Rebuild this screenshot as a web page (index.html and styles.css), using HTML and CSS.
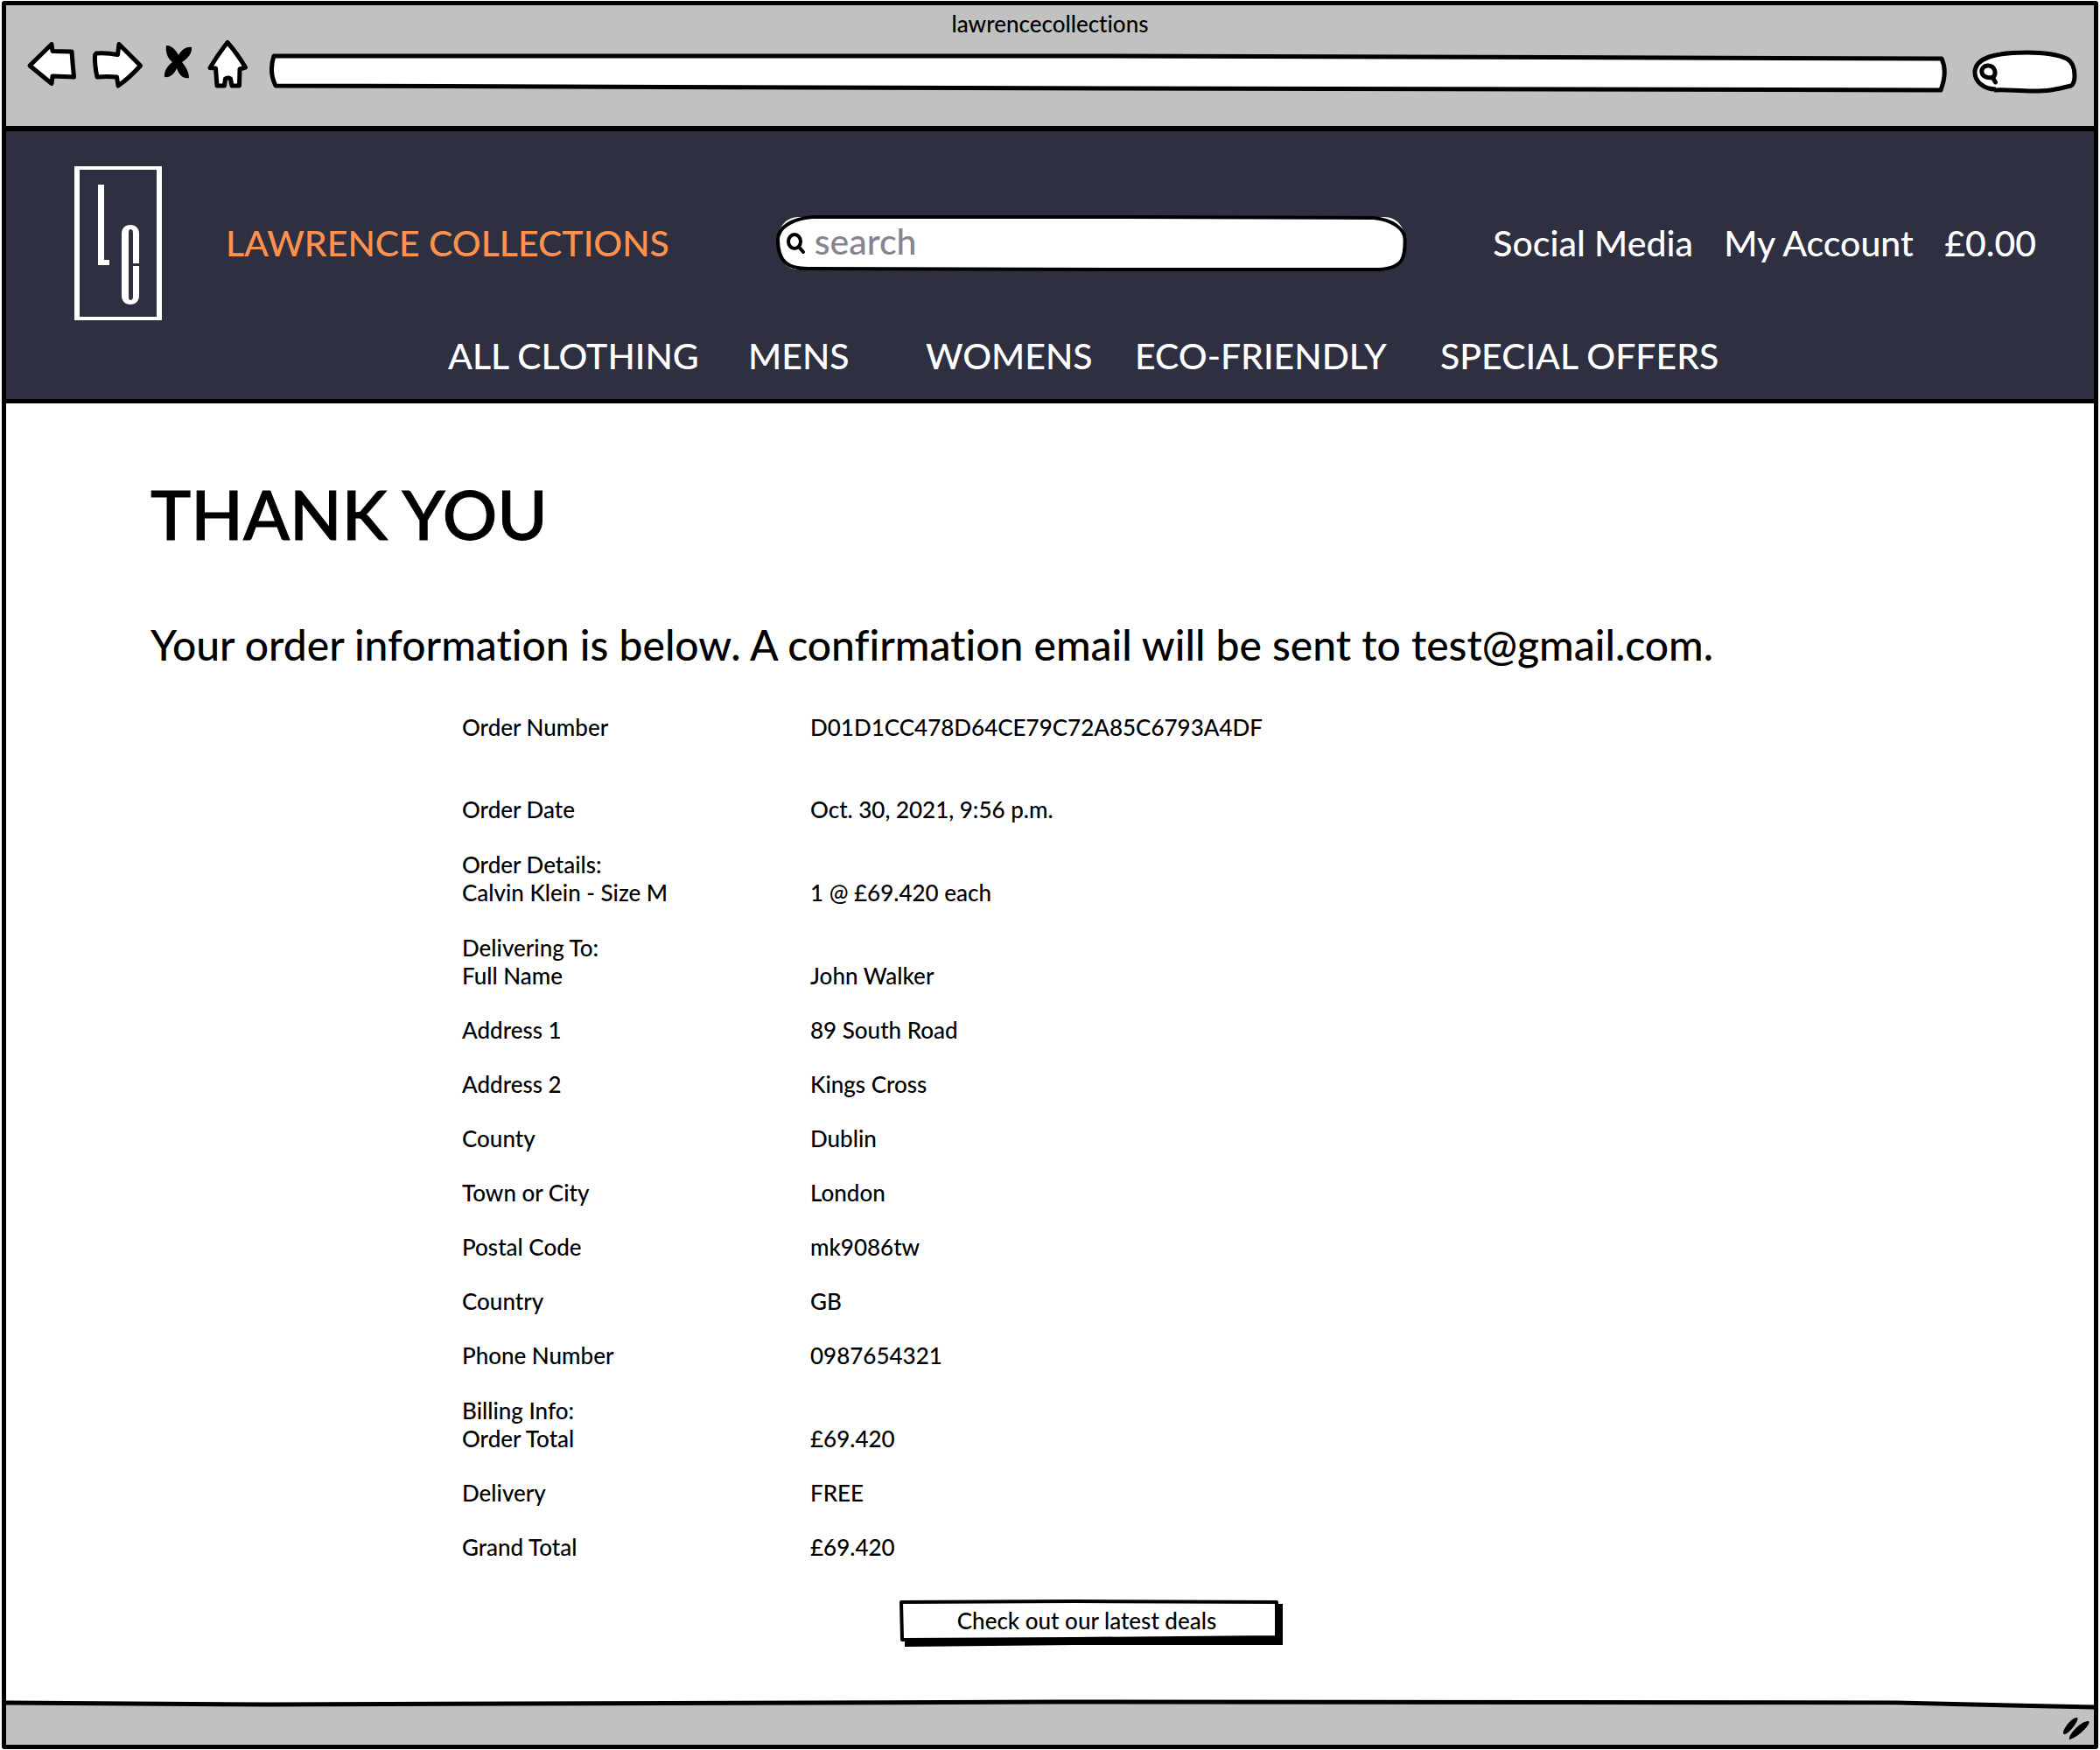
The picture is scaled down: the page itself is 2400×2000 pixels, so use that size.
FILE: index.html
```html
<!DOCTYPE html>
<html lang="en">
<head>
<meta charset="utf-8">
<title>lawrencecollections</title>
<link rel="stylesheet" href="styles.css">
</head>
<body>
<div class="window">
  <div class="chrome">
    <div class="chrome-title">lawrencecollections</div>
    <div class="toolbar">
      <button class="tool tool-wide" type="button" aria-label="Back">
        <svg viewBox="30 44 60 60"><path class="shape" d="M34 75L59 50.500L60 58.500L82 59Q83 73 84.500 88L60 87L59 95.500Z"/></svg>
      </button>
      <button class="tool tool-wide" type="button" aria-label="Forward">
        <svg viewBox="104 44 60 60"><path class="shape" d="M110 61Q122 60 134.500 62.500L136 50.500L160.500 75Q148 89 135 98L133.500 88Q122 87 111 88Q108 74 108.500 63Z"/></svg>
      </button>
      <button class="tool tool-stop" type="button" aria-label="Stop">
        <svg viewBox="178 44 44 60"><path d="M191 52C196 52 201 57 204 63C208 56 214 53 219 54C220 61 214 67 208 71C213 77 216 83 216 89C209 91 204 84 202 78C199 85 194 89 188 88C187 81 192 75 197 71C191 66 189 59 190 52Z"/></svg>
      </button>
      <button class="tool tool-home" type="button" aria-label="Home">
        <svg viewBox="236 44 50 60"><path class="shape" d="M260 48.500Q271 61 280.500 77L274 79L273.500 98L265 98L263.500 90Q260 88 257.500 90L256.500 98L248 98L246.500 78L240 77.500Q250 61 260 48.500Z"/></svg>
      </button>
      <label class="address">
        <svg class="sketch" viewBox="0 0 1918 46" preserveAspectRatio="none"><path class="shape" d="M6 4L960 4L1913 7Q1920 22 1912 43L960 41L8 38Q0 22 6 4Z"/></svg>
        <input class="bare" type="text" aria-label="Address">
      </label>
      <label class="quick">
        <svg class="sketch" viewBox="2255 56 122 52"><path class="shape" d="M2282 102C2268 102 2258 93 2258 83C2258 66 2280 60 2318 60C2340 60 2354 63 2363 67C2370 71 2372 80 2372 86C2372 92 2371 96 2368 98C2350 102 2345 104 2325 104C2305 104 2295 102 2280 103"/><path class="line" d="M2273 75C2268 75 2265 79 2266 83C2267 88 2274 90 2279 88C2283 84 2281 75 2273 75M2278 88L2281.500 94"/></svg>
        <input class="bare" type="text" aria-label="Quick search">
      </label>
    </div>
  </div>

  <header class="header">
    <div class="masthead">
      <a class="logo" href="#" aria-label="Lawrence Collections home">
        <svg viewBox="0 0 100 176" width="100" height="176">
          <path fill="#fff" fill-rule="evenodd" d="M0 0H100V176H0ZM6 4V172H94V4Z"/>
          <path fill="#fff" d="M27 21H34V107H40V113H27Z"/>
          <path fill="#fff" d="M54 77C54 71 58 67 64 67C70 67 74 71 74 77V111H67V76Q67 72 64 72Q62 72 62 76V149Q62 153 64 153Q67 153 67 149V114H74V148C74 154 70 158 64 158C58 158 54 154 54 148Z"/>
        </svg>
      </a>
      <a class="brand" href="#">LAWRENCE COLLECTIONS</a>
      <label class="search">
        <svg class="sketch" viewBox="0 0 722 64" preserveAspectRatio="none"><rect x="3" y="2" width="716" height="60" rx="22" fill="#fff"/><path class="shape thin" d="M42 2L400 2L684 3C706 5 720 16 720 28C720 48 719 60 690 62L400 62L40 61C14 62 2 54 2 28C2 14 18 4 42 2Z"/></svg>
        <svg class="lens" viewBox="0 0 26 30" width="26" height="30"><ellipse class="line thin" cx="11" cy="13" rx="7" ry="8"/><path class="line thin" d="M16 19L21 25"/></svg>
        <input class="bare search-input" type="text" placeholder="search" aria-label="Search">
      </label>
      <div class="account">
        <a href="#">Social Media</a>
        <a href="#">My Account</a>
        <a href="#">£0.00</a>
      </div>
    </div>
    <nav class="nav">
      <a href="#">ALL CLOTHING</a>
      <a href="#">MENS</a>
      <a href="#">WOMENS</a>
      <a href="#">ECO-FRIENDLY</a>
      <a href="#">SPECIAL OFFERS</a>
    </nav>
  </header>

  <main class="main">
    <h1>THANK YOU</h1>
    <p class="lead">Your order information is below. A confirmation email will be sent to test@gmail.com.</p>
    <section class="order">
      <table>
        <tbody>
          <tr class="spacious"><th scope="row">Order Number</th><td>D01D1CC478D64CE79C72A85C6793A4DF</td></tr>
          <tr><th scope="row">Order Date</th><td>Oct. 30, 2021, 9:56 p.m.</td></tr>
        </tbody>
        <tbody>
          <tr class="group"><th colspan="2">Order Details:</th></tr>
          <tr><th scope="row">Calvin Klein - Size M</th><td>1 @ £69.420 each</td></tr>
        </tbody>
        <tbody>
          <tr class="group"><th colspan="2">Delivering To:</th></tr>
          <tr><th scope="row">Full Name</th><td>John Walker</td></tr>
          <tr><th scope="row">Address 1</th><td>89 South Road</td></tr>
          <tr><th scope="row">Address 2</th><td>Kings Cross</td></tr>
          <tr><th scope="row">County</th><td>Dublin</td></tr>
          <tr><th scope="row">Town or City</th><td>London</td></tr>
          <tr><th scope="row">Postal Code</th><td>mk9086tw</td></tr>
          <tr><th scope="row">Country</th><td>GB</td></tr>
          <tr><th scope="row">Phone Number</th><td>0987654321</td></tr>
        </tbody>
        <tbody>
          <tr class="group"><th colspan="2">Billing Info:</th></tr>
          <tr><th scope="row">Order Total</th><td>£69.420</td></tr>
          <tr><th scope="row">Delivery</th><td>FREE</td></tr>
          <tr><th scope="row">Grand Total</th><td>£69.420</td></tr>
        </tbody>
      </table>
      <button class="deals" type="button">
        <svg class="sketch" viewBox="0 0 438 54" preserveAspectRatio="none"><path d="M6 6L438 5V52L200 52L6 54Z"/><path class="shape thin" d="M2 3L200 2L431 3L431 43L200 45L3 46Z"/></svg>
        <span>Check out our latest deals</span>
      </button>
    </section>
  </main>

  <footer class="footer">
    <svg class="sketch" viewBox="0 0 2386 52" preserveAspectRatio="none"><path fill="#c1c1c1" d="M0 4L300 6L1500 3L2386 9V52H0Z"/><path class="line" d="M0 4L300 6L1200 3L2160 4L2386 9"/></svg>
    <svg class="grip" viewBox="0 0 32 26" width="32" height="26"><path d="M1 19C1 12 12 0 17 1C20 3 8 20 2 20ZM8 26C6 21 22 4 30 5C34 8 16 25 8 26Z"/></svg>
  </footer>
</div>
</body>
</html>
```
FILE: styles.css
```css
* {
  box-sizing: border-box;
}

body {
  margin: 0;
  background: #fff;
  color: #000;
  font-family: Lato, "Open Sans", sans-serif;
  font-size: 26px;
  font-weight: 500;
  font-variant-ligatures: none;
  line-height: 32px;
}

a {
  color: inherit;
  text-decoration: none;
}

button,
input {
  font: inherit;
  color: inherit;
}

.window {
  display: flex;
  flex-direction: column;
  min-height: calc(100vh - 3px);
  margin: 1px 2px 2px;
  border: 5px solid #000;
  border-radius: 3px;
}

/* hand-drawn outlines stretch with the box they sit behind */
.sketch {
  position: absolute;
  inset: 0;
  width: 100%;
  height: 100%;
  overflow: visible;
}

.shape {
  fill: #fff;
  stroke: #000;
  stroke-width: 5;
  stroke-linejoin: round;
  vector-effect: non-scaling-stroke;
}

.line {
  fill: none;
  stroke: #000;
  stroke-width: 5;
  stroke-linecap: round;
  vector-effect: non-scaling-stroke;
}

.thin {
  stroke-width: 4;
}

.bare {
  position: relative;
  width: 100%;
  height: 100%;
  padding: 0 16px;
  border: 0;
  outline: 0;
  background: none;
}

/* browser chrome */
.chrome {
  padding-bottom: 40px;
  border-bottom: 6px solid #000;
  background: #c1c1c1;
}

.chrome-title {
  height: 38px;
  line-height: 42px;
  text-align: center;
}

.toolbar {
  display: flex;
  align-items: center;
  gap: 14px;
  height: 60px;
  padding: 0 17px 0 23px;
}

.tool {
  flex: none;
  height: 60px;
  padding: 0;
  border: 0;
  background: none;
}

.tool svg {
  display: block;
  width: 100%;
  height: 100%;
}

.tool-wide { width: 60px; }
.tool-stop { width: 44px; }
.tool-home { width: 50px; }

.address {
  position: relative;
  flex: 1;
  height: 46px;
  margin: 18px 16px 0 7px;
}

.quick {
  position: relative;
  flex: none;
  width: 122px;
  height: 52px;
  margin-top: 16px;
}

.quick .bare {
  padding-left: 36px;
}

/* shop header */
.header {
  padding: 40px 66px 25px 78px;
  border-bottom: 5px solid #000;
  background: #2e3042;
  color: #fff;
  font-size: 41px;
  line-height: 48px;
}

.masthead {
  display: grid;
  grid-template-columns: 173px 629fr 721fr 720fr;
  align-items: center;
}

.logo svg {
  display: block;
}

.brand {
  color: #ff914d;
}

.search {
  position: relative;
  display: flex;
  align-items: center;
  height: 64px;
}

.lens {
  position: relative;
  flex: none;
  margin-left: 10px;
}

.search-input {
  padding: 0 16px 6px 8px;
}

.search-input::placeholder {
  color: #868492;
  opacity: 1;
}

.account {
  display: flex;
  justify-content: space-between;
  padding-left: 99px;
}

.nav {
  display: grid;
  grid-template-columns: 343fr 203fr 239fr 349fr 331fr;
  margin: 17px 350px 0 427px;
}

.nav a {
  white-space: nowrap;
}

/* confirmation */
.main {
  flex: 1;
  padding: 78px 165px 60px;
}

h1 {
  margin: 0;
  font-size: 78px;
  font-weight: 500;
  line-height: 96px;
  -webkit-text-stroke: 1px;
}

.lead {
  margin: 72px 0 48px;
  font-size: 48px;
  line-height: 60px;
}

.order {
  max-width: 1438px;
  margin-left: 356px;
}

table {
  border-collapse: collapse;
}

th,
td {
  padding: 0 0 30px;
  font-weight: 500;
  text-align: left;
}

th {
  width: 398px;
}

tbody tr:last-child > * {
  padding-bottom: 31px;
}

.spacious > * {
  padding-bottom: 62px;
}

.group > * {
  padding-bottom: 0;
}

.deals {
  position: relative;
  display: block;
  width: 438px;
  height: 54px;
  margin: 13px auto 0;
  padding: 0 10px 6px 0;
  border: 0;
  background: none;
}

.deals span {
  position: relative;
}

.footer {
  position: relative;
  display: flex;
  justify-content: flex-end;
  align-items: center;
  height: 52px;
  padding: 13px 4px 0 0;
}

.grip {
  position: relative;
}
```
